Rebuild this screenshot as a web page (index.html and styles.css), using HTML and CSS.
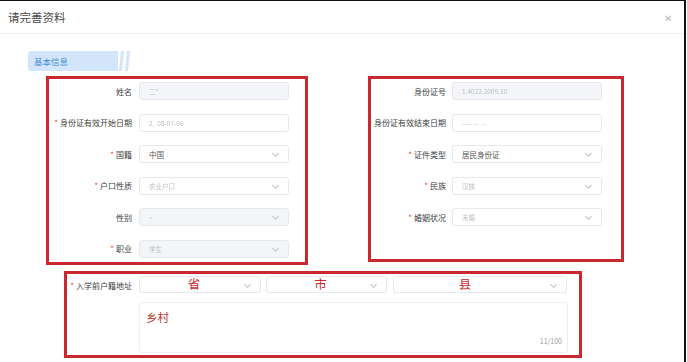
FILE: index.html
```html
<!DOCTYPE html>
<html lang="zh-CN">
<head>
    <meta charset="UTF-8">
    <meta name="viewport" content="width=device-width, initial-scale=1.0">
    <title>请完善资料</title>
    <link rel="stylesheet" href="styles.css">
</head>
<body>
    <div class="dialog">
        <div class="dialog-header">
            <span class="dialog-title">请完善资料</span>
            <span class="dialog-close">&#x2715;</span>
        </div>

        <div class="section-tag">
            <span class="tag-text">基本信息</span>
            <svg class="tag-stripes" width="14" height="20" viewBox="0 0 14 20">
                <polygon points="3,0 6,0 4,20 1,20" fill="#d3e5fa"/>
                <polygon points="9,0 12,0 10,20 7,20" fill="#d3e5fa"/>
            </svg>
        </div>

        <div class="columns">
            <div class="red-box box-left">
                <div class="form-row">
                    <label>姓名</label>
                    <div class="field disabled"><span class="blur">二*</span></div>
                </div>
                <div class="form-row">
                    <label><i>*</i>身份证有效开始日期</label>
                    <div class="field"><span class="blur">2.&nbsp;&nbsp;08-07-06</span></div>
                </div>
                <div class="form-row">
                    <label><i>*</i>国籍</label>
                    <div class="field select"><span class="value">中国</span></div>
                </div>
                <div class="form-row">
                    <label><i>*</i>户口性质</label>
                    <div class="field select"><span class="blur">农业户口</span></div>
                </div>
                <div class="form-row">
                    <label>性别</label>
                    <div class="field select disabled"><span class="blur">~</span></div>
                </div>
                <div class="form-row">
                    <label><i>*</i>职业</label>
                    <div class="field select disabled"><span class="blur">学生</span></div>
                </div>
            </div>

            <div class="red-box box-right">
                <div class="form-row">
                    <label>身份证号</label>
                    <div class="field disabled"><span class="blur">1.4022.2009.10</span></div>
                </div>
                <div class="form-row">
                    <label>身份证有效结束日期</label>
                    <div class="field"><span class="blur">----&nbsp;&nbsp;-- &nbsp;--</span></div>
                </div>
                <div class="form-row">
                    <label><i>*</i>证件类型</label>
                    <div class="field select"><span class="value">居民身份证</span></div>
                </div>
                <div class="form-row">
                    <label><i>*</i>民族</label>
                    <div class="field select"><span class="blur">汉族</span></div>
                </div>
                <div class="form-row">
                    <label><i>*</i>婚姻状况</label>
                    <div class="field select"><span class="blur">未婚</span></div>
                </div>
            </div>
        </div>

        <div class="red-box box-address">
            <label class="address-label"><i>*</i>入学前户籍地址</label>
            <div class="address-fields">
                <div class="address-selects">
                    <div class="field select sel-province"><span class="mark">省</span></div>
                    <div class="field select sel-city"><span class="mark">市</span></div>
                    <div class="field select sel-county"><span class="mark">县</span></div>
                </div>
                <div class="textarea">
                    <span class="village">乡村</span>
                    <span class="counter">11/100</span>
                </div>
            </div>
        </div>
    </div>
</body>
</html>
```

FILE: styles.css
```css
body {
    margin: 0;
    background: #ffffff;
    font-family: "Noto Sans CJK SC", "Noto Sans", Arial, sans-serif;
    color: #333;
}

.dialog {
    width: 684px;
    height: 361px;
    border-top: 1px solid #111;
    border-right: 2px solid #111;
    overflow: hidden;
}

.dialog-header {
    height: 32px;
    display: flex;
    align-items: center;
    justify-content: space-between;
    padding: 0 12px 0 8px;
    border-bottom: 1px solid #eceef2;
}

.dialog-title {
    font-size: 11.5px;
    color: #4a4a4a;
}

.dialog-close {
    font-size: 10px;
    color: #b4b7bd;
}

.section-tag {
    display: flex;
    align-items: stretch;
    height: 20px;
    margin: 17px 0 0 28px;
}

.tag-text {
    width: 84px;
    padding-left: 6px;
    background: #d3e5fa;
    border-radius: 3px 0 0 3px;
    color: #3f8ed8;
    font-size: 8.5px;
    line-height: 20px;
}

.columns {
    display: flex;
    align-items: flex-start;
    margin: 5px 0 0 46px;
    gap: 60px;
}

.red-box {
    border: 3px solid #c8282e;
    box-sizing: border-box;
}

.box-left {
    width: 262px;
    height: 189px;
    padding: 3px 16px 0 0;
}

.box-right {
    width: 256px;
    height: 186px;
    padding: 3px 19px 0 0;
}

.form-row {
    display: flex;
    align-items: center;
    height: 18px;
    margin-bottom: 13.6px;
}

.form-row label {
    flex: 1;
    text-align: right;
    font-size: 8px;
    color: #3e3e3e;
    margin-right: 7px;
    white-space: nowrap;
}

.box-right .form-row label {
    margin-right: 6px;
}

label i {
    font-style: normal;
    color: #e5473d;
    margin-right: 2px;
}

.field {
    position: relative;
    width: 150px;
    height: 18px;
    box-sizing: border-box;
    border: 1px solid #e6e8ec;
    border-radius: 3px;
    background: #fff;
    display: flex;
    align-items: center;
    padding-left: 9px;
}

.field.disabled {
    background: #f3f5f8;
}

.field.select::after {
    content: "";
    position: absolute;
    right: 10px;
    top: 5px;
    width: 4px;
    height: 4px;
    border-right: 1px solid #c0c4cc;
    border-bottom: 1px solid #c0c4cc;
    transform: rotate(45deg);
}

.value {
    font-size: 7.5px;
    color: #555;
}

.blur {
    font-size: 6.5px;
    color: #b8bcc4;
    filter: blur(0.4px);
}

.box-address {
    display: flex;
    width: 518px;
    height: 87px;
    margin: 6px 0 0 64px;
    padding: 2px 11px 0 0;
}

.address-label {
    width: 65px;
    flex-shrink: 0;
    font-size: 8px;
    color: #3e3e3e;
    padding-top: 4px;
    text-align: right;
    white-space: nowrap;
}

.address-fields {
    margin-left: 7px;
    flex: 1;
}

.address-selects {
    display: flex;
    gap: 5px;
}

.address-selects .field {
    height: 17px;
    flex-shrink: 0;
    justify-content: center;
    padding: 0 12px 0 0;
}

.sel-province {
    width: 122px;
}

.sel-city {
    width: 121px;
}

.sel-county {
    width: 174px;
    margin-left: 1px;
    padding-right: 30px !important;
}

.mark {
    font-size: 12.5px;
    color: #c8282e;
    line-height: 1;
}

.textarea {
    position: relative;
    height: 51px;
    margin-top: 9px;
    border: 1px solid #eceef2;
    border-radius: 3px;
    box-sizing: border-box;
}

.village {
    position: absolute;
    left: 6px;
    top: 6px;
    font-size: 11.5px;
    color: #c0392b;
}

.counter {
    position: absolute;
    right: 5px;
    bottom: 6px;
    font-size: 7px;
    color: #999;
}
```
